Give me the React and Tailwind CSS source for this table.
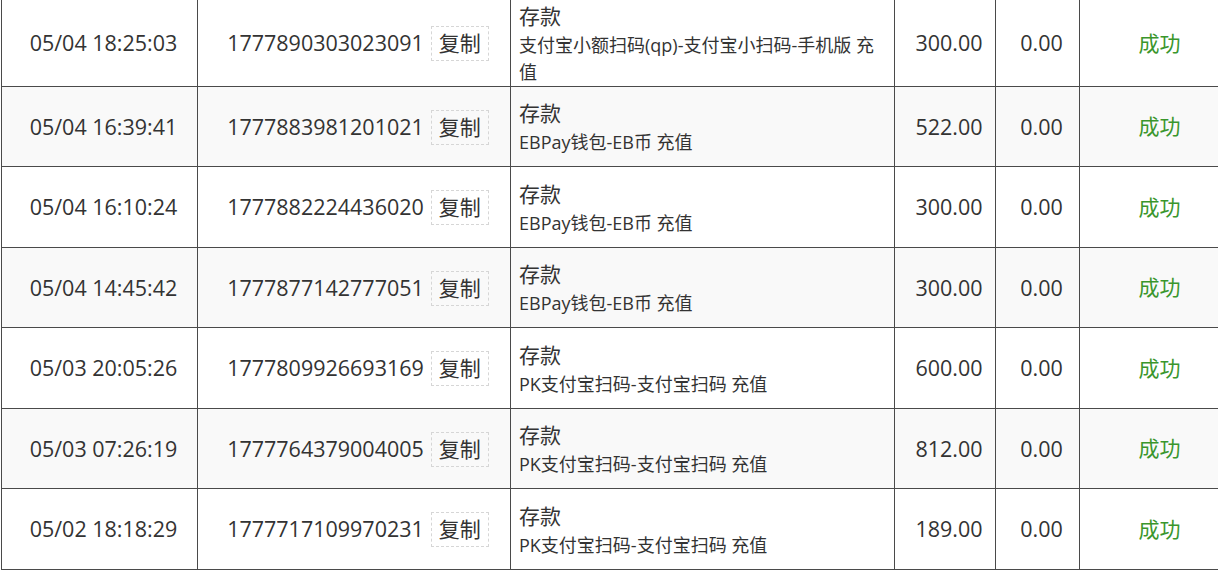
const rows = [
  { t: "05/04 18:25:03", id: "1777890303023091", desc: "支付宝小额扫码(qp)-支付宝小扫码-手机版 充值", amt: "300.00" },
  { t: "05/04 16:39:41", id: "1777883981201021", desc: "EBPay钱包-EB币 充值", amt: "522.00" },
  { t: "05/04 16:10:24", id: "1777882224436020", desc: "EBPay钱包-EB币 充值", amt: "300.00" },
  { t: "05/04 14:45:42", id: "1777877142777051", desc: "EBPay钱包-EB币 充值", amt: "300.00" },
  { t: "05/03 20:05:26", id: "1777809926693169", desc: "PK支付宝扫码-支付宝扫码 充值", amt: "600.00" },
  { t: "05/03 07:26:19", id: "1777764379004005", desc: "PK支付宝扫码-支付宝扫码 充值", amt: "812.00" },
  { t: "05/02 18:18:29", id: "1777717109970231", desc: "PK支付宝扫码-支付宝扫码 充值", amt: "189.00" },
];

const heights = ["h-[87px]", "h-[80px]", "h-[81px]", "h-[80px]", "h-[81px]", "h-[80px]", "h-[81px]"];

export default function App() {
  return (
    <div
      className="w-[1218px] h-[570px] overflow-hidden bg-white text-[#333]"
      style={{ fontFamily: '"Open Sans", "Noto Sans CJK SC", sans-serif' }}
    >
      <div className="ml-[1px] w-[1240px] border-l border-[#4a4a4a]">
        {rows.map((r, i) => (
          <div
            key={i}
            className={`flex border-b border-[#4a4a4a] ${heights[i]} ${i % 2 === 1 ? "bg-[#f9f9f9]" : "bg-white"}`}
          >
            <div className="w-[196px] shrink-0 border-r border-[#4a4a4a] pl-[8px] pt-[1px] flex items-center justify-center text-[21.5px]">
              {r.t}
            </div>
            <div className="w-[313px] shrink-0 border-r border-[#4a4a4a] pl-[8px] pt-[1px] flex items-center justify-center gap-[7px] text-[21.5px]">
              <span>{r.id}</span>
              <span className="h-[35px] px-[7px] border border-dashed border-[#d6d6d6] flex items-center text-[21px] leading-none">
                复制
              </span>
            </div>
            <div className="w-[384px] shrink-0 border-r border-[#4a4a4a] pl-[8px] pr-[6px] pt-[1px] flex flex-col justify-center">
              <div className="text-[21px] leading-[31px]">存款</div>
              <div className="text-[18px] leading-[27px]">{r.desc}</div>
            </div>
            <div className="w-[101px] shrink-0 border-r border-[#4a4a4a] pl-[8px] pt-[1px] flex items-center justify-center text-[21.5px]">
              {r.amt}
            </div>
            <div className="w-[84px] shrink-0 border-r border-[#4a4a4a] pl-[8px] pt-[1px] flex items-center justify-center text-[21.5px]">
              0.00
            </div>
            <div className="w-[151px] shrink-0 pl-[8px] pt-[1px] flex items-center justify-center text-[21px] text-[#3a962c]">
              成功
            </div>
          </div>
        ))}
      </div>
    </div>
  );
}
